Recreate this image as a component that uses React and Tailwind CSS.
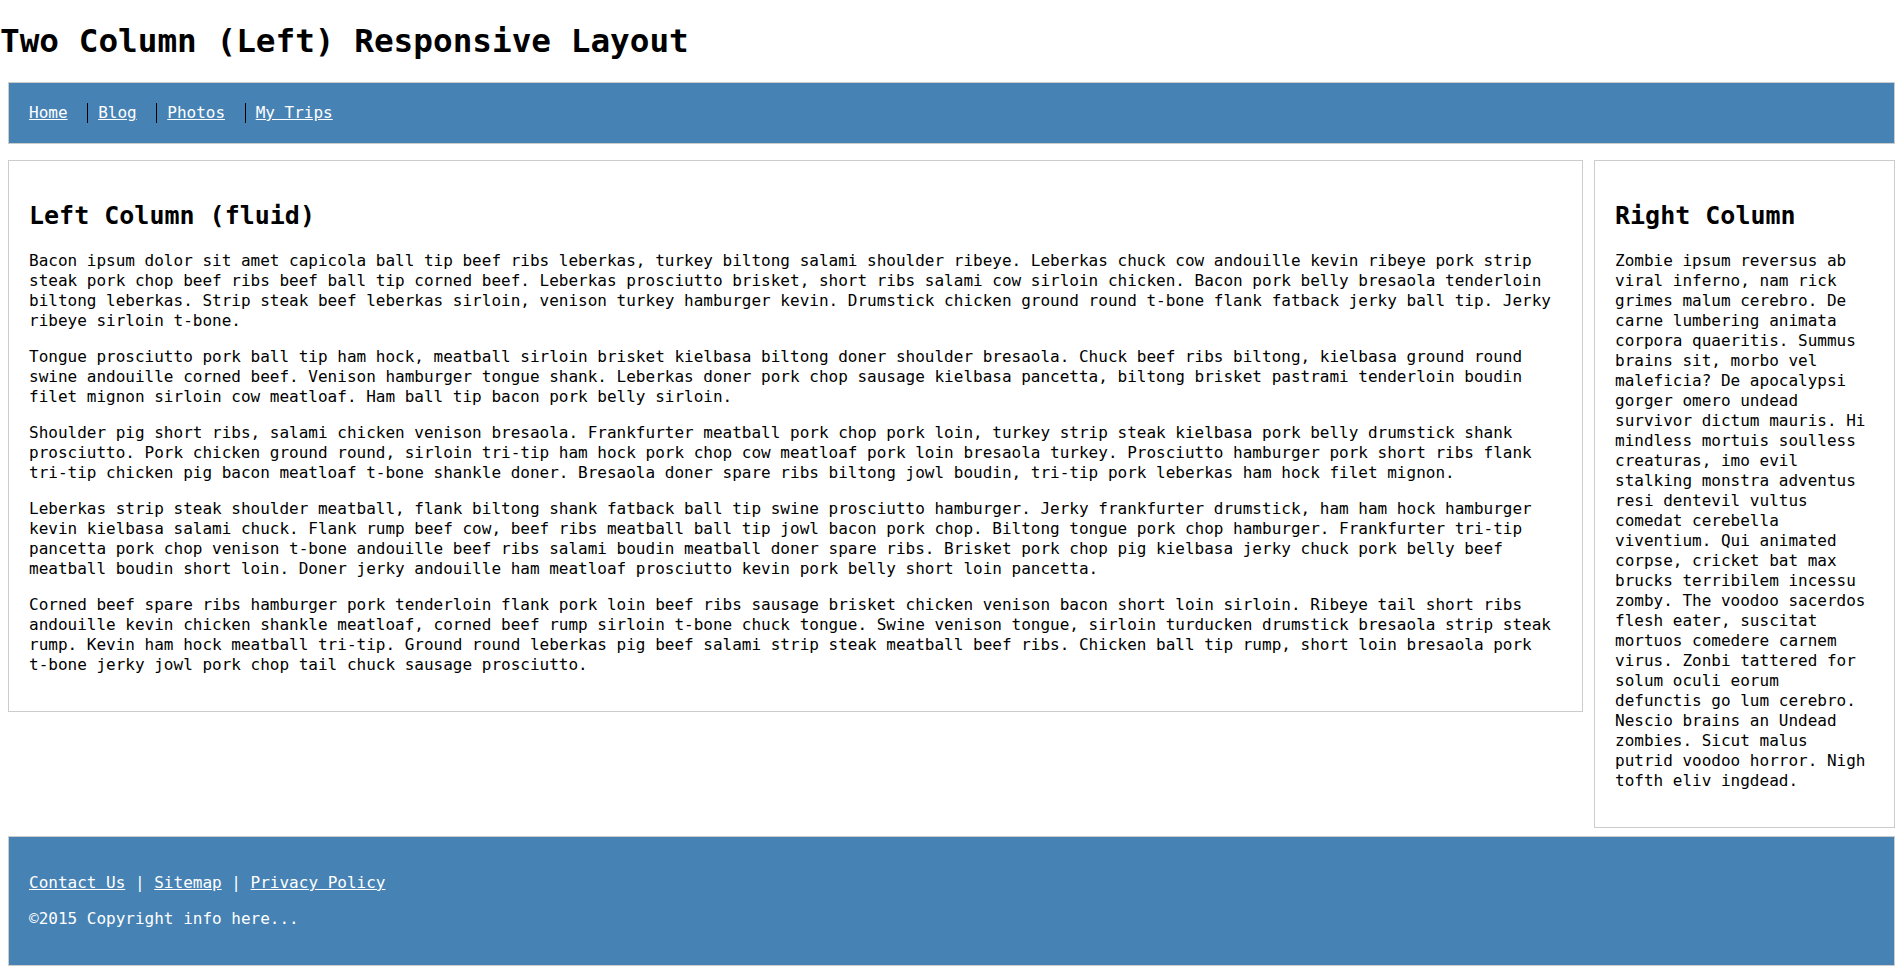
const leftParagraphs = [
  "Bacon ipsum dolor sit amet capicola ball tip beef ribs leberkas, turkey biltong salami shoulder ribeye. Leberkas chuck cow andouille kevin ribeye pork strip steak pork chop beef ribs beef ball tip corned beef. Leberkas prosciutto brisket, short ribs salami cow sirloin chicken. Bacon pork belly bresaola tenderloin biltong leberkas. Strip steak beef leberkas sirloin, venison turkey hamburger kevin. Drumstick chicken ground round t-bone flank fatback jerky ball tip. Jerky ribeye sirloin t-bone.",
  "Tongue prosciutto pork ball tip ham hock, meatball sirloin brisket kielbasa biltong doner shoulder bresaola. Chuck beef ribs biltong, kielbasa ground round swine andouille corned beef. Venison hamburger tongue shank. Leberkas doner pork chop sausage kielbasa pancetta, biltong brisket pastrami tenderloin boudin filet mignon sirloin cow meatloaf. Ham ball tip bacon pork belly sirloin.",
  "Shoulder pig short ribs, salami chicken venison bresaola. Frankfurter meatball pork chop pork loin, turkey strip steak kielbasa pork belly drumstick shank prosciutto. Pork chicken ground round, sirloin tri-tip ham hock pork chop cow meatloaf pork loin bresaola turkey. Prosciutto hamburger pork short ribs flank tri-tip chicken pig bacon meatloaf t-bone shankle doner. Bresaola doner spare ribs biltong jowl boudin, tri-tip pork leberkas ham hock filet mignon.",
  "Leberkas strip steak shoulder meatball, flank biltong shank fatback ball tip swine prosciutto hamburger. Jerky frankfurter drumstick, ham ham hock hamburger kevin kielbasa salami chuck. Flank rump beef cow, beef ribs meatball ball tip jowl bacon pork chop. Biltong tongue pork chop hamburger. Frankfurter tri-tip pancetta pork chop venison t-bone andouille beef ribs salami boudin meatball doner spare ribs. Brisket pork chop pig kielbasa jerky chuck pork belly beef meatball boudin short loin. Doner jerky andouille ham meatloaf prosciutto kevin pork belly short loin pancetta.",
  "Corned beef spare ribs hamburger pork tenderloin flank pork loin beef ribs sausage brisket chicken venison bacon short loin sirloin. Ribeye tail short ribs andouille kevin chicken shankle meatloaf, corned beef rump sirloin t-bone chuck tongue. Swine venison tongue, sirloin turducken drumstick bresaola strip steak rump. Kevin ham hock meatball tri-tip. Ground round leberkas pig beef salami strip steak meatball beef ribs. Chicken ball tip rump, short loin bresaola pork t-bone jerky jowl pork chop tail chuck sausage prosciutto.",
]

const zombieText =
  "Zombie ipsum reversus ab viral inferno, nam rick grimes malum cerebro. De carne lumbering animata corpora quaeritis. Summus brains sit, morbo vel maleficia? De apocalypsi gorger omero undead survivor dictum mauris. Hi mindless mortuis soulless creaturas, imo evil stalking monstra adventus resi dentevil vultus comedat cerebella viventium. Qui animated corpse, cricket bat max brucks terribilem incessu zomby. The voodoo sacerdos flesh eater, suscitat mortuos comedere carnem virus. Zonbi tattered for solum oculi eorum defunctis go lum cerebro. Nescio brains an Undead zombies. Sicut malus putrid voodoo horror. Nigh tofth eliv ingdead."

const navLinks = ["Home", "Blog", "Photos", "My Trips"]

export default function App() {
  return (
    <div className="min-h-screen bg-white text-black font-['DejaVu_Sans_Mono',monospace] text-[16px] leading-[20px]">
      <h1 className="mt-[22px] mb-[22px] text-[32.7px] leading-[38px] font-bold">
        Two Column (Left) Responsive Layout
      </h1>

      <div className="px-2">
        {/* top nav */}
        <nav className="border border-[#ccc] bg-[#4682b4] px-[10px] pt-[20px] pb-[20px]">
          <ul>
            {navLinks.map((label, i) => (
              <li
                key={label}
                className={
                  i === 0
                    ? "inline-block px-[10px]"
                    : "inline-block ml-[9.6px] px-[10px] border-l border-black"
                }
              >
                <a href="#" className="text-white underline">
                  {label}
                </a>
              </li>
            ))}
          </ul>
        </nav>

        <div className="mt-4 flex items-start gap-[11px]">
          <main className="flex-1 border border-[#ccc] pl-5 pr-[28px] py-5">
            <h2 className="mt-5 mb-5 text-[25px] leading-[30px] font-bold">
              Left Column (fluid)
            </h2>
            {leftParagraphs.map((text, i) => (
              <p key={i} className="mb-4">
                {text}
              </p>
            ))}
          </main>

          <aside className="w-[301px] shrink-0 border border-[#ccc] p-5">
            <h2 className="mt-5 mb-5 text-[25px] leading-[30px] font-bold">
              Right Column
            </h2>
            <p className="mb-4">{zombieText}</p>
          </aside>
        </div>

        <footer className="mt-[8px] border border-[#ccc] bg-[#4682b4] px-5 pt-[36px] pb-[36px] text-white">
          <p>
            <a href="#" className="underline">Contact Us</a> |{" "}
            <a href="#" className="underline">Sitemap</a> |{" "}
            <a href="#" className="underline">Privacy Policy</a>
          </p>
          <p className="mt-4">©2015 Copyright info here...</p>
        </footer>
      </div>
    </div>
  )
}
